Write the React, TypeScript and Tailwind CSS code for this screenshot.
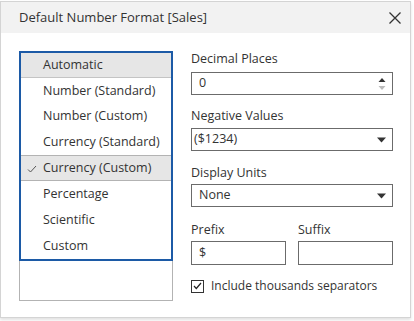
import React from "react";

const FORMATS = [
  { label: "Automatic", h: "h-[25px]", active: true },
  { label: "Number (Standard)", h: "h-[26px]" },
  { label: "Number (Custom)", h: "h-[25px]" },
  { label: "Currency (Standard)", h: "h-[26px]" },
  { label: "Currency (Custom)", h: "h-[26px]", selected: true },
  { label: "Percentage", h: "h-[26px]" },
  { label: "Scientific", h: "h-[26px]" },
  { label: "Custom", h: "h-[26px]" },
];

function Caret() {
  return (
    <svg width="9" height="6" viewBox="0 0 9 6" className="shrink-0">
      <path d="M0 0.5h9L4.5 5.5z" fill="#333" />
    </svg>
  );
}

function Label({ children, className = "" }: { children: React.ReactNode; className?: string }) {
  return <div className={"h-4 leading-4 text-[12.5px] text-[#333] " + className}>{children}</div>;
}

export default function App() {
  return (
    <div
      className="w-[414px] h-[321px] bg-white overflow-hidden"
      style={{ fontFamily: '"Open Sans", "Liberation Sans", sans-serif' }}
    >
      <div className="mt-px w-[411px] h-[317px] border border-[#d4d4d4] bg-white shadow-[0_2px_3px_rgba(0,0,0,0.12)]">
        <header className="h-[31px] bg-[#f2f2f2] flex items-center justify-between pl-[18px] pr-[8px]">
          <span className="text-[13px] text-[#333]">Default Number Format [Sales]</span>
          <svg width="14" height="14" viewBox="0 0 14 14">
            <path d="M1.5 1.5L12.5 12.5M12.5 1.5L1.5 12.5" stroke="#333" strokeWidth="1.3" />
          </svg>
        </header>

        <div className="flex pl-[18px] pt-[18px]">
          <div className="w-[154px] h-[250px] border border-[#b3b3b3]">
            <ul className="-m-px border-2 border-[#1c5aa6]">
              {FORMATS.map((f) => (
                <li
                  key={f.label}
                  className={
                    "relative flex items-center pl-[22px] text-[12.5px] text-[#333] " +
                    f.h +
                    (f.active ? " bg-[#e6e6e6] border-b border-[#c4c4c4]" : "") +
                    (f.selected ? " bg-[#e6e6e6] border-y border-[#b3b3b3]" : "")
                  }
                >
                  {f.selected && (
                    <svg width="10" height="8" viewBox="0 0 10 8" className="absolute left-[6px] top-[9px]">
                      <path d="M1 4.5L3.5 7L9 1" stroke="#555" strokeWidth="1" fill="none" />
                    </svg>
                  )}
                  {f.label}
                </li>
              ))}
            </ul>
          </div>

          <div className="ml-[18px] w-[202px]">
            <Label>Decimal Places</Label>
            <div className="mt-[5px] h-[23px] border border-[#6b6b6b] flex items-center justify-between pl-[7px] pr-[6px] text-[12.5px] text-[#333]">
              <span>0</span>
              <svg width="8" height="14" viewBox="0 0 8 14">
                <path d="M0.5 5h7L4 1z" fill="#333" />
                <path d="M0.5 9h7L4 13z" fill="#bbb" />
              </svg>
            </div>

            <Label className="mt-[13px]">Negative Values</Label>
            <div className="mt-[4px] h-[23px] border border-[#6b6b6b] flex items-center justify-between pl-[2px] pr-[6px] text-[12.5px] text-[#333]">
              <span>($1234)</span>
              <Caret />
            </div>

            <Label className="mt-[14px]">Display Units</Label>
            <div className="mt-[3px] h-[23px] border border-[#6b6b6b] flex items-center justify-between pl-[7px] pr-[6px] text-[12.5px] text-[#333]">
              <span>None</span>
              <Caret />
            </div>

            <div className="mt-[15px] flex gap-[12px]">
              <div className="w-[95px]">
                <Label>Prefix</Label>
                <div className="mt-[3px] h-[24px] border border-[#6b6b6b] flex items-center pl-[7px] text-[12.5px] text-[#333]">
                  $
                </div>
              </div>
              <div className="flex-1">
                <Label>Suffix</Label>
                <div className="mt-[3px] h-[24px] border border-[#6b6b6b]" />
              </div>
            </div>

            <div className="mt-[13px] h-4 flex items-center gap-[7px]">
              <div className="w-[13px] h-[13px] border border-[#333] flex items-center justify-center">
                <svg width="9" height="8" viewBox="0 0 9 8">
                  <path d="M1 4L3.3 6.5L8 1" stroke="#222" strokeWidth="1.2" fill="none" />
                </svg>
              </div>
              <span className="text-[12px] text-[#333]">Include thousands separators</span>
            </div>
          </div>
        </div>
      </div>
    </div>
  );
}
